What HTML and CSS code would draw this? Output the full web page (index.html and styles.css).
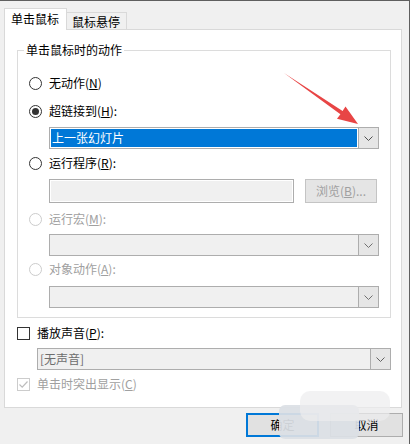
FILE: index.html
```html
<!DOCTYPE html>
<html lang="zh-CN">
<head>
<meta charset="utf-8">
<title>动作设置</title>
<link rel="stylesheet" href="styles.css">
</head>
<body>
<div class="window">
  <div class="tabs">
    <div class="tab tab-active">单击鼠标</div>
    <div class="tab">鼠标悬停</div>
  </div>
  <div class="panel">
    <div class="group">
      <div class="group-title">单击鼠标时的动作</div>
      <div class="row r1"><span class="radio"></span><span>无动作(<u>N</u>)</span></div>
      <div class="row r2"><span class="radio checked"></span><span>超链接到(<u>H</u>):</span></div>
      <div class="combo combo-focus c1">
        <div class="combo-text"><span>上一张幻灯片</span></div>
        <div class="combo-btn"><svg width="9" height="5" viewBox="0 0 9 5"><path d="M0.5 0.5 L4.5 4.5 L8.5 0.5" fill="none" stroke="#505050" stroke-width="1"/></svg></div>
      </div>
      <div class="row r3"><span class="radio"></span><span>运行程序(<u>R</u>):</span></div>
      <div class="textrow">
        <div class="textbox"></div>
        <div class="browse">浏览(<u>B</u>)...</div>
      </div>
      <div class="row r4 disabled"><span class="radio"></span><span>运行宏(<u>M</u>):</span></div>
      <div class="combo c2">
        <div class="combo-text"></div>
        <div class="combo-btn"><svg width="9" height="5" viewBox="0 0 9 5"><path d="M0.5 0.5 L4.5 4.5 L8.5 0.5" fill="none" stroke="#707070" stroke-width="1"/></svg></div>
      </div>
      <div class="row r5 disabled"><span class="radio"></span><span>对象动作(<u>A</u>):</span></div>
      <div class="combo c3">
        <div class="combo-text"></div>
        <div class="combo-btn"><svg width="9" height="5" viewBox="0 0 9 5"><path d="M0.5 0.5 L4.5 4.5 L8.5 0.5" fill="none" stroke="#707070" stroke-width="1"/></svg></div>
      </div>
    </div>
    <div class="row crow1"><span class="check"></span><span>播放声音(<u>P</u>):</span></div>
    <div class="combo c4">
      <div class="combo-text"><span class="muted">[无声音]</span></div>
      <div class="combo-btn"><svg width="9" height="5" viewBox="0 0 9 5"><path d="M0.5 0.5 L4.5 4.5 L8.5 0.5" fill="none" stroke="#606060" stroke-width="1"/></svg></div>
    </div>
    <div class="row crow2 disabled"><span class="check check-dis"><svg width="11" height="11" viewBox="0 0 11 11"><path d="M1.5 5.5 L4.2 8.2 L9.5 2.5" fill="none" stroke="#bdbdbd" stroke-width="1.2"/></svg></span><span>单击时突出显示(<u>C</u>)</span></div>
  </div>
  <div class="buttons">
    <div class="btn btn-default">确定</div>
    <div class="btn">取消</div>
  </div>
  <svg class="arrow" width="417" height="445" viewBox="0 0 417 445"><polygon points="284,72 342.6,110 345.5,105.4 358,123 337,117.8 340.4,113.3" fill="#e84545"/></svg>
  <div class="watermark"></div>
  <div class="watermark-soft"></div>
</div>
</body>
</html>
```
FILE: styles.css
```css
html, body {
  margin: 0;
  padding: 0;
  background: #ffffff;
}
body {
  font-family: "Noto Sans CJK SC", "Noto Sans", sans-serif;
  font-size: 12px;
  color: #000;
}
u { text-decoration: underline; text-underline-offset: 1px; }
.window {
  position: relative;
  width: 410px;
  height: 444px;
  background: #f0f0f0;
  border-top: 1px solid #5f5f5f;
  border-right: 1px solid #5f5f5f;
  padding-top: 7px;
  box-sizing: border-box;
  overflow: hidden;
}
.tabs {
  display: flex;
  align-items: flex-start;
  height: 22px;
  margin-left: 4px;
  margin-bottom: -1px;
}
.tab {
  height: 17px;
  margin-top: 4px;
  padding: 0 6px 0 5px;
  line-height: 17px;
  border: 1px solid #d9d9d9;
  border-bottom: none;
  border-left: none;
  background: #f0f0f0;
  box-sizing: border-box;
}
.tab-active {
  position: relative;
  z-index: 1;
  height: 22px;
  margin-top: 0;
  padding: 0 7px 0 6px;
  line-height: 20px;
  border-left: 1px solid #d9d9d9;
  background: #ffffff;
}
.panel {
  margin-left: 4px;
  width: 398px;
  height: 379px;
  box-sizing: border-box;
  background: #ffffff;
  border: 1px solid #d9d9d9;
  padding: 20px 10px 0 12px;
}
.group {
  border: 1px solid #dcdcdc;
  width: 374px;
  box-sizing: border-box;
  padding: 0 11px 9px 11px;
}
.group-title {
  margin: -10px 0 0 -5px;
  padding: 0 2px;
  line-height: 18px;
  height: 18px;
  width: fit-content;
  background: #ffffff;
}
.row {
  display: flex;
  align-items: center;
  height: 20px;
  line-height: 20px;
  gap: 7px;
  white-space: nowrap;
}
.r1 { margin-top: 14px; }
.r2 { margin-top: 8px; }
.c1 { margin-top: 6px; }
.r3 { margin-top: 4px; }
.r4 { margin-top: 6px; }
.c2 { margin-top: 5px; }
.r5 { margin-top: 3px; }
.c3 { margin-top: 7px; }
.disabled { color: #a0a0a0; }
.radio {
  width: 13px;
  height: 13px;
  box-sizing: border-box;
  border: 1px solid #333333;
  border-radius: 50%;
  background: #ffffff;
  flex: none;
  display: flex;
  align-items: center;
  justify-content: center;
}
.disabled .radio { border-color: #cccccc; }
.radio.checked::after {
  content: "";
  width: 7px;
  height: 7px;
  border-radius: 50%;
  background: #333333;
}
.combo {
  display: flex;
  height: 22px;
  margin-left: 20px;
  box-sizing: border-box;
  border: 1px solid #adadad;
  background: #f0f0f0;
}
.combo-text {
  flex: 1;
  display: flex;
  align-items: center;
  padding-left: 2px;
  line-height: 18px;
}
.combo-focus .combo-text {
  border: 1px solid #ffffff;
  background: #0078d7;
  color: #ffffff;
  padding-left: 1px;
}
.combo-btn {
  width: 19px;
  flex: none;
  border-left: 1px solid #adadad;
  background: #e6e6e6;
  display: flex;
  align-items: center;
  justify-content: center;
}
.textrow {
  display: flex;
  gap: 11px;
  margin: 6px 0 0 20px;
  height: 24px;
}
.textbox {
  width: 245px;
  box-sizing: border-box;
  border: 1px solid #adadad;
  box-shadow: inset 0 0 0 1px #ffffff;
  background: #f0f0f0;
}
.browse {
  width: 72px;
  box-sizing: border-box;
  border: 1px solid #c4c4c4;
  background: #e5e5e5;
  color: #a0a0a0;
  text-align: center;
  line-height: 22px;
}
.crow1 { margin-top: 5px; }
.c4 { margin: 5px 0 0 20px; width: 354px; }
.crow2 { margin-top: 4px; }
.check {
  width: 13px;
  height: 13px;
  box-sizing: border-box;
  border: 1px solid #333333;
  background: #ffffff;
  flex: none;
  display: flex;
}
.check-dis { border-color: #cccccc; }
.muted { color: #6d6d6d; }
.buttons {
  display: flex;
  justify-content: flex-end;
  gap: 11px;
  margin: 5px 6px 0 0;
}
.btn {
  width: 73px;
  height: 24px;
  box-sizing: border-box;
  border: 1px solid #adadad;
  background: #e1e1e1;
  text-align: center;
  line-height: 22px;
}
.btn-default {
  border: 2px solid #0078d7;
  line-height: 20px;
}
.arrow {
  position: absolute;
  left: 0;
  top: 0;
  pointer-events: none;
}
.watermark {
  position: absolute;
  left: 279px;
  top: 404px;
  width: 80px;
  height: 34px;
  border-radius: 6px;
  background: rgba(220, 224, 229, 0.93);
}
.watermark-soft {
  position: absolute;
  left: 300px;
  top: 390px;
  width: 90px;
  height: 30px;
  border-radius: 10px;
  background: rgba(236, 236, 238, 0.7);
}
```
